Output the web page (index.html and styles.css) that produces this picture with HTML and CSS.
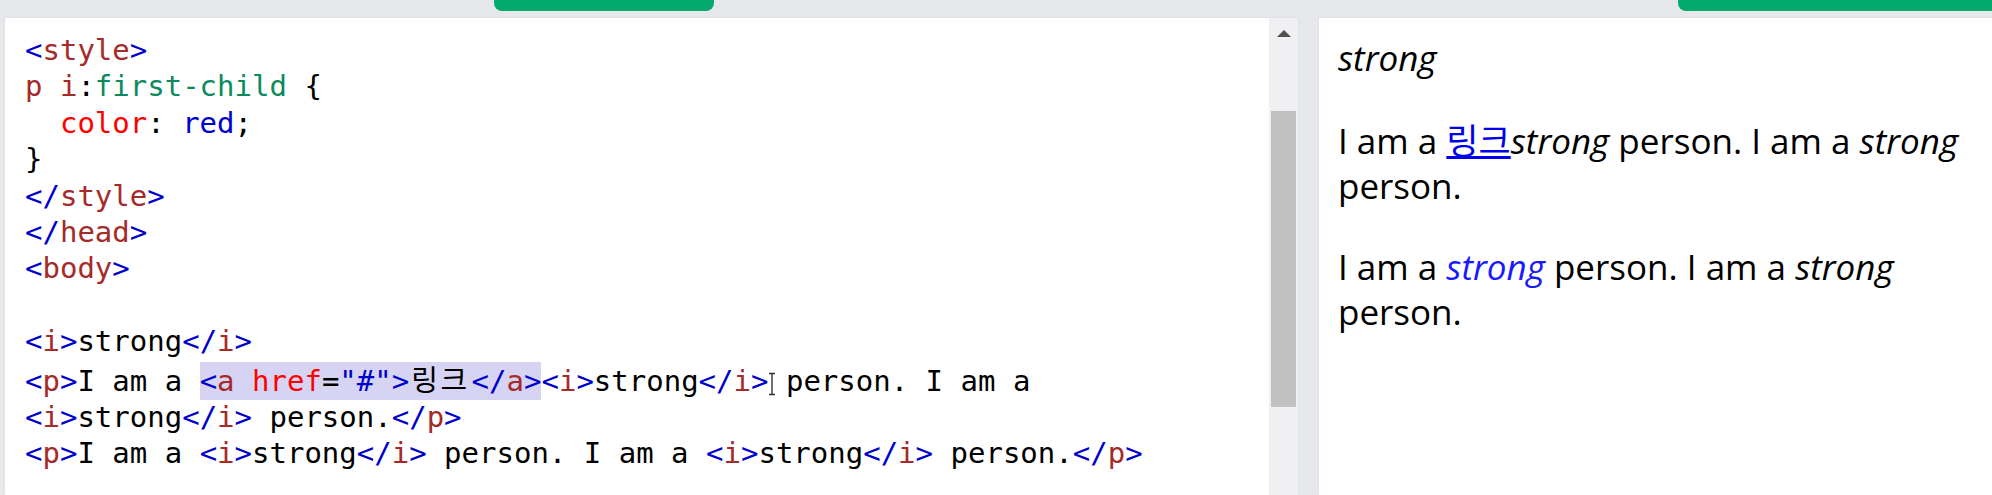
FILE: index.html
```html
<!DOCTYPE html>
<html lang="ko">
<head>
<meta charset="utf-8">
<title>Tryit Editor</title>
<link rel="stylesheet" href="styles.css">
</head>
<body>
<div class="app">
  <div class="topbar">
    <div class="tab tab-run"></div>
    <div class="tab tab-side"></div>
  </div>
  <div class="main">
    <div class="editor">
<pre class="code"><span class="b">&lt;</span><span class="t">style</span><span class="b">&gt;</span>
<span class="t">p i</span>:<span class="ps">first-child</span> {
  <span class="pr">color</span>: <span class="v">red</span>;
}
<span class="b">&lt;/</span><span class="t">style</span><span class="b">&gt;</span>
<span class="b">&lt;/</span><span class="t">head</span><span class="b">&gt;</span>
<span class="b">&lt;</span><span class="t">body</span><span class="b">&gt;</span>

<span class="b">&lt;</span><span class="t">i</span><span class="b">&gt;</span>strong<span class="b">&lt;/</span><span class="t">i</span><span class="b">&gt;</span>
<span class="b">&lt;</span><span class="t">p</span><span class="b">&gt;</span>I am a <span class="sel"><span class="b">&lt;</span><span class="t">a</span> <span class="at">href</span>=<span class="v">"#"</span><span class="b">&gt;</span><span class="ko">링크</span><span class="b">&lt;/</span><span class="t">a</span><span class="b">&gt;</span></span><span class="b">&lt;</span><span class="t">i</span><span class="b">&gt;</span>strong<span class="b">&lt;/</span><span class="t">i</span><span class="b">&gt;</span> person. I am a
<span class="b">&lt;</span><span class="t">i</span><span class="b">&gt;</span>strong<span class="b">&lt;/</span><span class="t">i</span><span class="b">&gt;</span> person.<span class="b">&lt;/</span><span class="t">p</span><span class="b">&gt;</span>
<span class="b">&lt;</span><span class="t">p</span><span class="b">&gt;</span>I am a <span class="b">&lt;</span><span class="t">i</span><span class="b">&gt;</span>strong<span class="b">&lt;/</span><span class="t">i</span><span class="b">&gt;</span> person. I am a <span class="b">&lt;</span><span class="t">i</span><span class="b">&gt;</span>strong<span class="b">&lt;/</span><span class="t">i</span><span class="b">&gt;</span> person.<span class="b">&lt;/</span><span class="t">p</span><span class="b">&gt;</span></pre>
      <div class="vscroll">
        <div class="arrow-up"></div>
        <div class="thumb"></div>
      </div>
      <svg class="ibeam" width="10" height="24" viewBox="0 0 10 24">
        <path d="M2 1.5h6M5 1.5v21M2 22.5h6" fill="none" stroke="#333" stroke-width="1.4"/>
      </svg>
    </div>
    <div class="result">
      <div class="line"><i>strong</i></div>
      <p>I am a <a href="#" class="link">링크</a><i>strong</i> person. I am a <i>strong</i> person.</p>
      <p>I am a <i class="first">strong</i> person. I am a <i>strong</i> person.</p>
    </div>
  </div>
</div>
</body>
</html>
```
FILE: styles.css
```css
html, body {
  margin: 0;
  padding: 0;
}
body {
  background: #e7e8eb;
  width: 1992px;
  height: 495px;
  overflow: hidden;
}
.app {
  display: flex;
  flex-direction: column;
  height: 495px;
}
.topbar {
  height: 18px;
  display: flex;
  flex: none;
}
.tab {
  height: 11px;
  background: #04aa6d;
}
.tab-run {
  margin-left: 494px;
  width: 220px;
  border-radius: 0 0 8px 8px;
}
.tab-side {
  margin-left: 964px;
  flex: 1;
  border-radius: 0 0 0 8px;
}
.main {
  flex: 1;
  display: flex;
  gap: 21px;
  min-height: 0;
}
.editor {
  position: relative;
  margin-left: 5px;
  width: 1293px;
  background: #ffffff;
  display: flex;
  box-shadow: 0 0 2px rgba(0,0,0,0.08);
}
.code {
  flex: 1;
  margin: 0;
  padding: 14px 0 0 20px;
  font-family: "DejaVu Sans Mono", "Noto Sans CJK KR", monospace;
  font-size: 29px;
  line-height: 36.4px;
  color: #000;
  white-space: pre;
  overflow: hidden;
}
.b { color: #0000cd; }
.t { color: #a52a2a; }
.at { color: #ff0000; }
.v { color: #0000cd; }
.pr { color: #ff0000; }
.ps { color: #0b8a5e; }
.ko {
  font-family: "Noto Sans CJK KR", sans-serif;
  letter-spacing: 2.5px;
  padding: 0 2px 0 2px;
  color: #000;
}
.sel {
  background: #d6d4f2;
  padding: 2px 0;
}
.vscroll {
  width: 29px;
  flex: none;
  background: #f0f0f3;
  display: flex;
  flex-direction: column;
  align-items: center;
}
.arrow-up {
  margin-top: 12px;
  width: 0;
  height: 0;
  border-left: 7px solid transparent;
  border-right: 7px solid transparent;
  border-bottom: 7px solid #505050;
}
.thumb {
  margin-top: 74px;
  width: 25px;
  height: 296px;
  background: #c1c1c1;
}
.ibeam {
  position: absolute;
  left: 762px;
  top: 354px;
}
.result {
  flex: 1;
  background: #ffffff;
  padding: 17px 20px 0 19px;
  font-family: "Open Sans", "Noto Sans CJK KR", sans-serif;
  font-size: 35px;
  line-height: 45.5px;
  color: #000;
  box-shadow: 0 0 2px rgba(0,0,0,0.08);
}
.result p {
  margin: 35px 0 0 0;
}
.link {
  color: #0000ee;
  text-decoration: underline;
  font-family: "Noto Sans CJK KR", sans-serif;
}
.first {
  color: #1a1aff;
}
```
